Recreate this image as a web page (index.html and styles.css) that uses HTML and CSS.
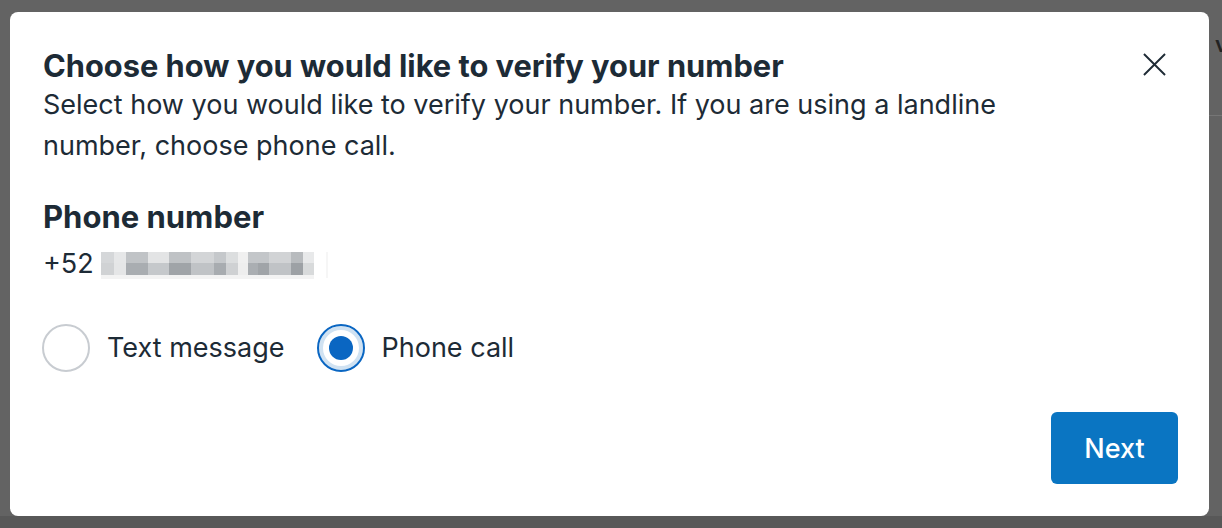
FILE: index.html
```html
<!DOCTYPE html>
<html lang="en">
<head>
<meta charset="utf-8">
<title>Verify your number</title>
<link rel="stylesheet" href="styles.css">
</head>
<body>
<div class="backdrop">
  <span class="behind-glyph">v</span>
  <span class="behind-line"></span>
  <div class="modal" role="dialog" aria-labelledby="dlg-title">
    <div class="modal-header">
      <h2 id="dlg-title" class="modal-title">Choose how you would like to verify your number</h2>
      <button class="close-btn" aria-label="Dismiss">
        <svg width="24" height="24" viewBox="0 0 24 24" aria-hidden="true">
          <path d="M1 1 L23 23 M23 1 L1 23" stroke="#1f2b36" stroke-width="2" stroke-linecap="butt" fill="none"/>
        </svg>
      </button>
    </div>
    <p class="modal-desc">Select how you would like to verify your number. If you are using a landline number, choose phone call.</p>
    <h3 class="field-label">Phone number</h3>
    <div class="phone-value">
      <span>+52</span>
      <span class="blurred" aria-hidden="true">
        <span class="blur-row r1"></span>
        <span class="blur-row r2"></span>
        <span class="blur-row r3"></span>
      </span>
      <span class="blur-tail" aria-hidden="true"></span>
    </div>
    <div class="options">
      <label class="option">
        <span class="radio"></span>
        <span class="option-text">Text message</span>
      </label>
      <label class="option">
        <span class="radio checked"><span class="dot"></span></span>
        <span class="option-text">Phone call</span>
      </label>
    </div>
    <div class="modal-footer">
      <button class="primary-btn">Next</button>
    </div>
  </div>
</div>
</body>
</html>
```
FILE: styles.css
```css
* { box-sizing: border-box; }
html, body {
  margin: 0;
  padding: 0;
}
body {
  width: 1222px;
  height: 528px;
  overflow: hidden;
  background: #626262;
  font-family: Inter, "Noto Sans", sans-serif;
  color: #1d2b36;
}
.backdrop {
  position: relative;
  width: 1222px;
  height: 528px;
  padding: 12px 13px 0 10px;
  background: linear-gradient(#636363 0, #636363 516px, #585858 516px, #585858 528px);
}
.behind-glyph {
  position: absolute;
  left: 1215px;
  top: 31px;
  font-size: 22px;
  font-weight: 600;
  color: #222;
}
.behind-line {
  position: absolute;
  left: 1209px;
  top: 115px;
  width: 13px;
  height: 1px;
  background: #767676;
}
.modal {
  position: relative;
  width: 1199px;
  height: 504px;
  background: #fff;
  border-radius: 8px;
  padding: 28px 31px 32px 32px;
  display: flex;
  flex-direction: column;
}
.modal-header {
  display: flex;
  align-items: flex-start;
  justify-content: space-between;
}
.modal-title {
  margin: 8px 0 0 1px;
  font-size: 30.8px;
  line-height: 36px;
  font-weight: 700;
  letter-spacing: 0;
  color: #1d2b36;
}
.close-btn {
  width: 48px;
  height: 48px;
  border: 0;
  background: transparent;
  padding: 0;
  display: flex;
  align-items: center;
  justify-content: center;
  cursor: pointer;
}
.close-btn svg { width: 23px; height: 23px; }
.modal-desc {
  margin: -4px 0 0 1px;
  font-size: 27px;
  line-height: 41px;
  font-weight: 400;
  color: #1d2b36;
  max-width: 1000px;
}
.field-label {
  margin: 33px 0 0 1px;
  font-size: 31px;
  line-height: 36px;
  font-weight: 700;
  color: #1d2b36;
}
.phone-value {
  margin: 11px 0 0 1px;
  font-size: 27px;
  line-height: 36px;
  display: flex;
  align-items: center;
  color: #1d2b36;
}
.blurred {
  display: flex;
  flex-direction: column;
  margin-left: 7px;
  margin-top: 2px;
  width: 213px;
}
.blur-row { display: block; width: 213px; }
.r1 {
  height: 11px;
  background: linear-gradient(90deg,
    #d5d7d9 0 13px, #e6e7e8 13px 25px, #c0c3c6 25px 47px, #e3e4e5 47px 68px,
    #bfc2c5 68px 90px, #d3d5d7 90px 113px, #c5c8cb 113px 125px, #dcdedf 125px 137px,
    #f0f0f0 137px 147px, #c3c6c9 147px 168px, #d1d3d5 168px 190px, #b8bbbe 190px 202px,
    #e8e9ea 202px 213px);
}
.r2 {
  height: 12px;
  background: linear-gradient(90deg,
    #d0d2d4 0 13px, #e5e6e7 13px 25px, #a9adb1 25px 47px, #c5c8cb 47px 68px,
    #a0a4a8 68px 90px, #c0c3c6 90px 113px, #a8acb0 113px 125px, #cfd1d3 125px 137px,
    #eeeeee 137px 147px, #aaaeb2 147px 157px, #a0a4a8 157px 168px, #c0c3c6 168px 190px,
    #9da1a5 190px 202px, #d8dadb 202px 213px);
}
.r3 {
  height: 4px;
  background: #f3f3f3;
}
.blur-tail {
  width: 2px;
  height: 26px;
  margin-left: 12px;
  margin-top: 2px;
  background: #f6f6f6;
}
.options {
  margin-top: 42px;
  display: flex;
  align-items: center;
  gap: 32px;
}
.option {
  display: flex;
  align-items: center;
  gap: 17px;
  cursor: pointer;
}
.radio {
  width: 48px;
  height: 48px;
  border-radius: 50%;
  border: 2px solid #c8ccd1;
  background: #fff;
  display: flex;
  align-items: center;
  justify-content: center;
}
.radio.checked {
  border: 2px solid #0a66c2;
  box-shadow: inset 0 0 0 4px #d0e2f2;
}
.dot {
  width: 24px;
  height: 24px;
  border-radius: 50%;
  background: #0a66c2;
}
.option-text {
  font-size: 27px;
  line-height: 36px;
  color: #1d2b36;
}
.modal-footer {
  margin-top: auto;
  display: flex;
  justify-content: flex-end;
}
.primary-btn {
  width: 127px;
  height: 72px;
  border: 0;
  border-radius: 6px;
  background: #0a75c2;
  color: #fff;
  font-family: Inter, "Noto Sans", sans-serif;
  font-size: 27px;
  font-weight: 500;
  cursor: pointer;
}
```
